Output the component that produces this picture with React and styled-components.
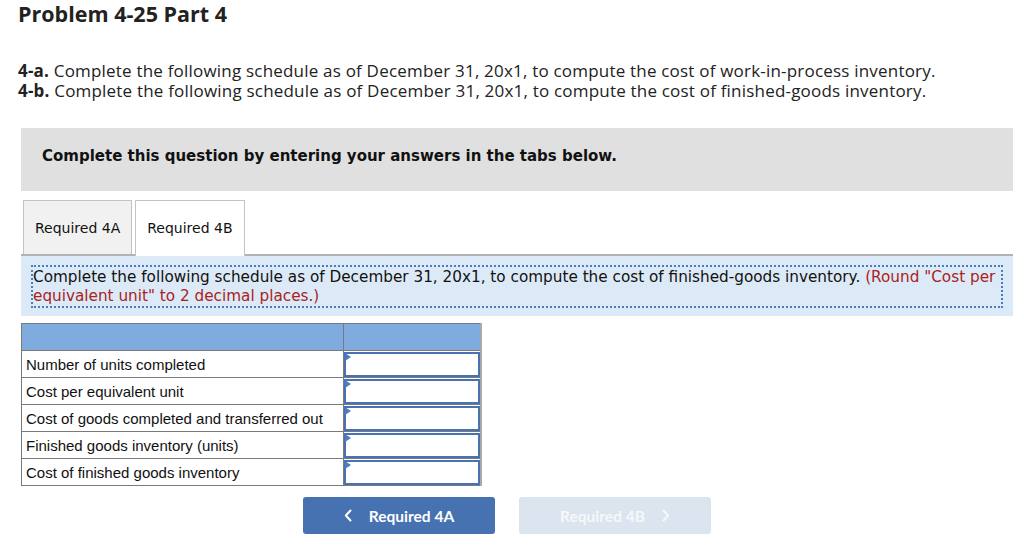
import React from "react";
import styled, { createGlobalStyle } from "styled-components";

const Global = createGlobalStyle`
  html, body { margin: 0; padding: 0; background: #fff; }
  body { font-family: "Open Sans", "Lato", sans-serif; color: #111; }
`;

const Page = styled.div`
  width: 1024px;
  height: 545px;
  box-sizing: border-box;
  padding: 0 11px 0 21px;
  overflow: hidden;
`;

const Title = styled.h1`
  margin: 0 0 0 -3px;
  padding-top: 1px;
  font-family: "Open Sans", sans-serif;
  font-weight: 700;
  font-size: 21.5px;
  line-height: 25px;
  color: #222;
`;

const Questions = styled.div`
  margin-top: 35px;
  margin-left: -3px;
  font-family: "Open Sans", sans-serif;
  font-size: 17px;
  letter-spacing: 0.2px;
  line-height: 20px;
  color: #222;
`;

const QLine = styled.div`
  b { font-weight: 700; }
`;

const Notice = styled.div`
  margin-top: 27px;
  height: 63px;
  box-sizing: border-box;
  background: #e0e0e0;
  padding: 19px 0 0 21px;
  font-family: "DejaVu Sans", Verdana, sans-serif;
  font-weight: 700;
  font-size: 15px;
  line-height: 18px;
  color: #111;
`;

const TabBar = styled.div`
  margin-top: 9px;
  display: flex;
  align-items: flex-end;
  gap: 3px;
  padding-left: 2px;
  border-bottom: 2px solid #b3b3b3;
  height: 54px;
`;

const Tab = styled.div`
  box-sizing: border-box;
  padding: 0 11px;
  display: flex;
  align-items: center;
  border: 1px solid #c4c4c4;
  border-bottom: none;
  background: ${(p) => (p.$active ? "#fff" : "#f1f1f1")};
  margin-bottom: ${(p) => (p.$active ? "-2px" : "0")};
  height: ${(p) => (p.$active ? "56px" : "54px")};
  padding-bottom: ${(p) => (p.$active ? "2px" : "0")};
  font-family: "DejaVu Sans", Verdana, sans-serif;
  font-size: 14px;
  color: #111;
`;

const Instruction = styled.div`
  background: #dceaf7;
  padding: 9px 10px 8px 10px;
`;

const Dotted = styled.div`
  border: 2px dotted #4a7cc0;
  padding: 1px 2px 0 0;
  font-family: "DejaVu Sans", Verdana, sans-serif;
  font-size: 15.25px;
  line-height: 19px;
  color: #111;
`;

const Red = styled.span`
  color: #a8231c;
`;

const Table = styled.table`
  margin-top: 7px;
  border-collapse: collapse;
  font-family: "Liberation Sans", Arial, sans-serif;
  font-size: 15px;
  color: #111;
  border: 1px solid #7a7a7a;
  border-right: 2px solid #a9a9a9;
`;

const HeadCell = styled.td`
  background: #80abdf;
  height: 26px;
  padding: 0;
  border: 1px solid #7a7a7a;
  width: ${(p) => p.$w}px;
`;

const LabelCell = styled.td`
  height: 26px;
  padding: 0 0 0 4px;
  border: 1px solid #7a7a7a;
  white-space: nowrap;
`;

const InputCell = styled.td`
  padding: 0;
  height: 26px;
  border: 1px solid #7a7a7a;
  border-top: none;
`;

const InputBox = styled.div`
  position: relative;
  height: 21px;
  border: 2px solid #4a72b2;
  background: #fff;
  margin-top: 1px;
  &::before {
    content: "";
    position: absolute;
    left: -1px;
    top: -1px;
    border-left: 6px solid #4a7dc4;
    border-top: 4px solid transparent;
    border-bottom: 4px solid transparent;
  }
`;

const Nav = styled.div`
  margin-top: 11px;
  display: flex;
  justify-content: center;
  gap: 24px;
  padding-right: 20px;
`;

const NavButton = styled.button`
  width: 192px;
  height: 37px;
  border: none;
  border-radius: 3px;
  background: ${(p) => (p.$disabled ? "#dbe4ef" : "#4672b1")};
  color: ${(p) => (p.$disabled ? "#f6f8fb" : "#fff")};
  font-family: "Lato", sans-serif;
  font-weight: 700;
  font-size: 15.5px;
  display: flex;
  align-items: center;
  justify-content: center;
  gap: 17px;
  padding: 0;
`;

const Chevron = ({ dir }) => (
  <svg width="8" height="13" viewBox="0 0 8 13" fill="none">
    <path
      d={dir === "left" ? "M6.5 1.5 L1.8 6.5 L6.5 11.5" : "M1.5 1.5 L6.2 6.5 L1.5 11.5"}
      stroke="currentColor"
      strokeWidth="2"
      strokeLinecap="round"
      strokeLinejoin="round"
    />
  </svg>
);

const rows = [
  "Number of units completed",
  "Cost per equivalent unit",
  "Cost of goods completed and transferred out",
  "Finished goods inventory (units)",
  "Cost of finished goods inventory",
];

export default function App() {
  return (
    <>
      <Global />
      <Page>
        <Title>Problem 4-25 Part 4</Title>
        <Questions>
          <QLine>
            <b>4-a.</b> Complete the following schedule as of December 31, 20x1, to compute the cost of work-in-process inventory.
          </QLine>
          <QLine>
            <b>4-b.</b> Complete the following schedule as of December 31, 20x1, to compute the cost of finished-goods inventory.
          </QLine>
        </Questions>
        <Notice>Complete this question by entering your answers in the tabs below.</Notice>
        <TabBar>
          <Tab>Required 4A</Tab>
          <Tab $active>Required 4B</Tab>
        </TabBar>
        <Instruction>
          <Dotted>
            Complete the following schedule as of December 31, 20x1, to compute the cost of finished-goods inventory.{" "}
            <Red>(Round "Cost per equivalent unit" to 2 decimal places.)</Red>
          </Dotted>
        </Instruction>
        <Table>
          <tbody>
            <tr>
              <HeadCell $w={321} />
              <HeadCell $w={136} />
            </tr>
            {rows.map((r) => (
              <tr key={r}>
                <LabelCell>{r}</LabelCell>
                <InputCell>
                  <InputBox />
                </InputCell>
              </tr>
            ))}
          </tbody>
        </Table>
        <Nav>
          <NavButton>
            <Chevron dir="left" />
            Required 4A
          </NavButton>
          <NavButton $disabled>
            Required 4B
            <Chevron dir="right" />
          </NavButton>
        </Nav>
      </Page>
    </>
  );
}
